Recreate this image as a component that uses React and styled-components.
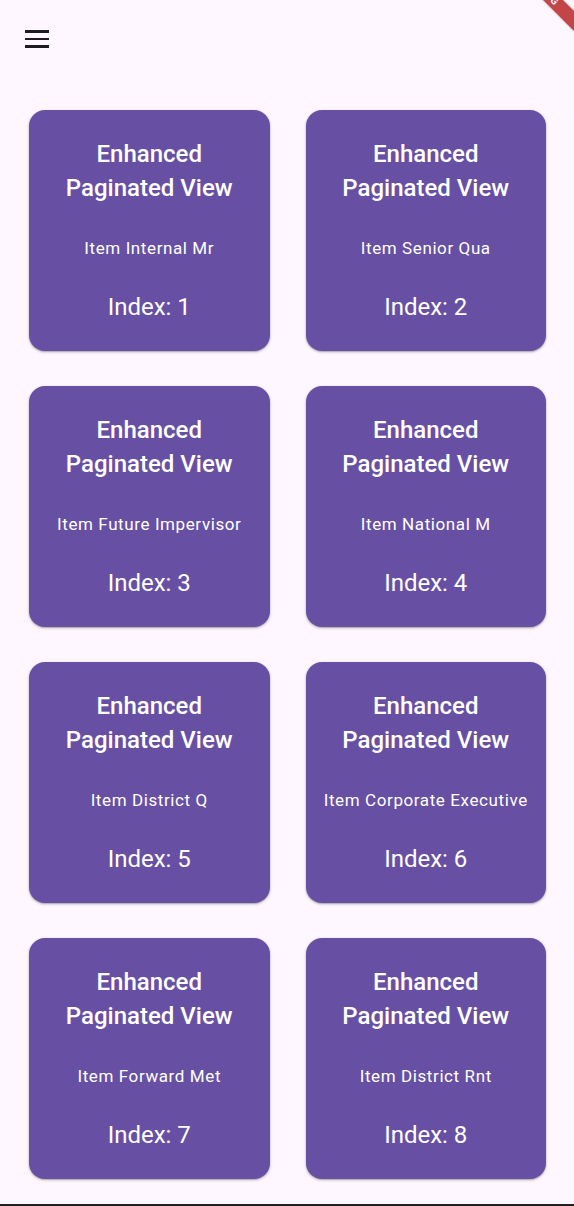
import React from "react";
import styled, { createGlobalStyle } from "styled-components";

const Global = createGlobalStyle`
  html, body { margin: 0; padding: 0; background: #fef7ff; }
  body { font-family: Roboto, "Noto Sans", "Liberation Sans", sans-serif; }
  * { box-sizing: border-box; }
`;

const Screen = styled.div`
  position: relative;
  width: 574px;
  height: 1206px;
  overflow: hidden;
  background: #fef7ff;
  border-bottom: 2px solid #1f1f1f;
`;

const Header = styled.header`
  height: 78px;
  display: flex;
  align-items: center;
  padding-left: 25px;
`;

const MenuButton = styled.button`
  width: 24px;
  height: 24px;
  padding: 0;
  border: 0;
  background: transparent;
  display: flex;
  flex-direction: column;
  justify-content: center;
  gap: 5px;
  cursor: pointer;
`;

const Bar = styled.span`
  display: block;
  width: 24px;
  height: 2.5px;
  background: #1d1b20;
`;

const Grid = styled.main`
  display: grid;
  grid-template-columns: 1fr 1fr;
  column-gap: 36px;
  row-gap: 35px;
  padding: 32px 28px 0 29px;
`;

const Card = styled.div`
  height: 241px;
  border-radius: 16px;
  background: #6750a4;
  box-shadow: 0 1px 3px rgba(0, 0, 0, 0.28), 0 1px 1px rgba(0, 0, 0, 0.12);
  display: flex;
  flex-direction: column;
  align-items: center;
  justify-content: center;
  color: #ffffff;
  text-align: center;
  padding-bottom: 1px;
`;

const Title = styled.div`
  font-size: 24px;
  font-weight: 500;
  line-height: 34px;
`;

const Subtitle = styled.div`
  margin-top: 31px;
  font-size: 17px;
  letter-spacing: 0.6px;
  line-height: 24px;
  font-weight: 400;
  white-space: nowrap;
`;

const IndexLabel = styled.div`
  margin-top: 31px;
  font-size: 24px;
  line-height: 32px;
  font-weight: 400;
`;

const BannerClip = styled.div`
  position: absolute;
  top: 0;
  right: 0;
  width: 40px;
  height: 40px;
  overflow: hidden;
  pointer-events: none;
`;

const Ribbon = styled.div`
  position: absolute;
  left: -40px;
  top: -16px;
  width: 100px;
  height: 14px;
  transform: rotate(45deg);
  background: rgba(170, 0, 0, 0.72);
  box-shadow: 0 0 3px rgba(0, 0, 0, 0.25);
  color: #fff;
  font-size: 10px;
  font-weight: 700;
  line-height: 14px;
  text-align: center;
  letter-spacing: 1px;
  font-family: Roboto, "Liberation Sans", sans-serif;
`;

const items = [
  "Item Internal Mr",
  "Item Senior Qua",
  "Item Future Impervisor",
  "Item National M",
  "Item District Q",
  "Item Corporate Executive",
  "Item Forward Met",
  "Item District Rnt",
];

export default function App() {
  return (
    <Screen>
      <Global />
      <Header>
        <MenuButton aria-label="menu">
          <Bar />
          <Bar />
          <Bar />
        </MenuButton>
      </Header>
      <Grid>
        {items.map((name, i) => (
          <Card key={i}>
            <Title>
              Enhanced
              <br />
              Paginated View
            </Title>
            <Subtitle>{name}</Subtitle>
            <IndexLabel>Index: {i + 1}</IndexLabel>
          </Card>
        ))}
      </Grid>
      <BannerClip>
        <Ribbon>DEBUG</Ribbon>
      </BannerClip>
    </Screen>
  );
}
